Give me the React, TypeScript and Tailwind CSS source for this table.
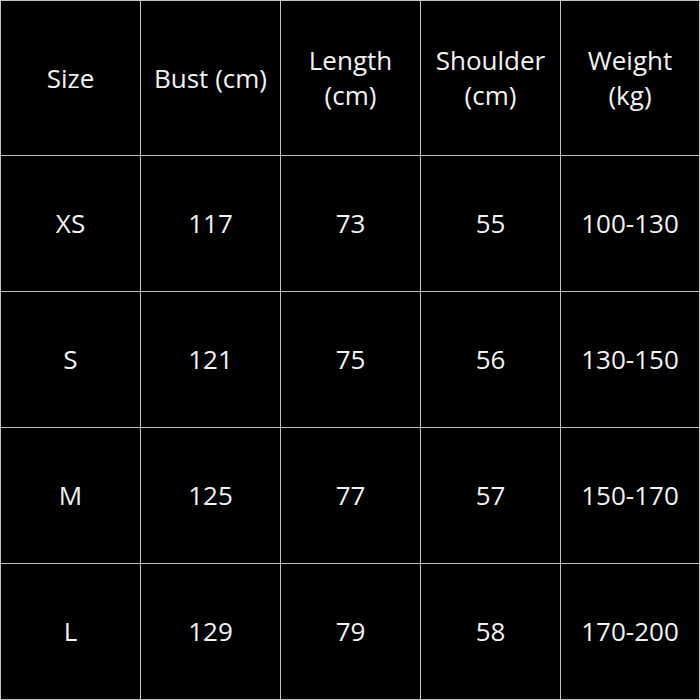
const header = ["Size", "Bust (cm)", "Length\n(cm)", "Shoulder\n(cm)", "Weight\n(kg)"];

const rows = [
  ["XS", "117", "73", "55", "100-130"],
  ["S", "121", "75", "56", "130-150"],
  ["M", "125", "77", "57", "150-170"],
  ["L", "129", "79", "58", "170-200"],
];

function Cell({ text }: { text: string }) {
  return (
    <div className="flex items-center justify-center bg-black text-center whitespace-pre-line text-[26px] leading-[35px] text-[#f2f2f2]">
      {text}
    </div>
  );
}

export default function App() {
  return (
    <div
      className="grid h-[700px] w-[700px] grid-cols-[139px_139px_139px_139px_138px] grid-rows-[154px_135px_135px_135px_135px] gap-px bg-[#c4c4c4] p-px"
      style={{ fontFamily: '"Open Sans", "Liberation Sans", sans-serif' }}
    >
      {header.map((h) => (
        <Cell key={h} text={h} />
      ))}
      {rows.map((r) => r.map((c, i) => <Cell key={r[0] + i} text={c} />))}
    </div>
  );
}
